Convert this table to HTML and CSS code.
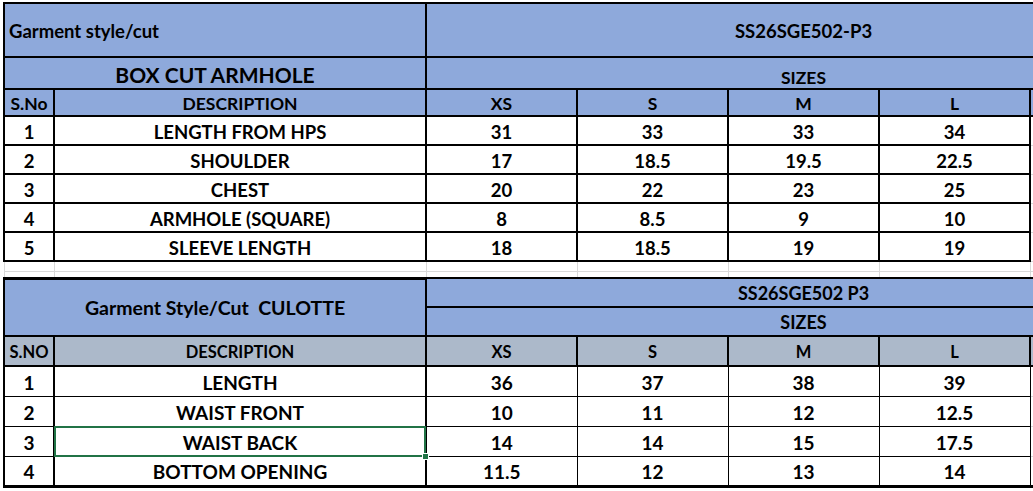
FILE: index.html
```html
<!DOCTYPE html>
<html>
<head>
<meta charset="utf-8">
<link rel="stylesheet" href="styles.css">
</head>
<body>
<div class="sheet">
<table class="grid">
  <colgroup>
    <col class="c-sno"><col class="c-desc"><col class="c-size"><col class="c-size"><col class="c-size"><col class="c-size"><col class="c-size">
  </colgroup>
  <tbody class="t1">
    <tr class="r-title">
      <td colspan="2" class="blue left title">Garment style/cut</td>
      <td colspan="5" class="blue code">SS26SGE502-P3</td>
    </tr>
    <tr class="r-sub">
      <td colspan="2" class="blue big">BOX CUT ARMHOLE</td>
      <td colspan="5" class="blue sizes">SIZES</td>
    </tr>
    <tr class="r-head">
      <td class="blue hd">S.No</td>
      <td class="blue hd">DESCRIPTION</td>
      <td class="blue hd">XS</td>
      <td class="blue hd">S</td>
      <td class="blue hd">M</td>
      <td class="blue hd">L</td>
      <td class="blue hd"></td>
    </tr>
    <tr class="r-data"><td>1</td><td>LENGTH FROM HPS</td><td>31</td><td>33</td><td>33</td><td>34</td><td class="off"></td></tr>
    <tr class="r-data"><td>2</td><td>SHOULDER</td><td>17</td><td>18.5</td><td>19.5</td><td>22.5</td><td class="off"></td></tr>
    <tr class="r-data"><td>3</td><td>CHEST</td><td>20</td><td>22</td><td>23</td><td>25</td><td class="off"></td></tr>
    <tr class="r-data"><td>4</td><td>ARMHOLE (SQUARE)</td><td>8</td><td>8.5</td><td>9</td><td>10</td><td class="off"></td></tr>
    <tr class="r-data"><td>5</td><td>SLEEVE LENGTH</td><td>18</td><td>18.5</td><td>19</td><td>19</td><td class="off"></td></tr>
  </tbody>
  <tbody class="gap">
    <tr class="r-gap1"><td></td><td></td><td></td><td></td><td></td><td></td><td></td></tr>
    <tr class="r-gap2"><td></td><td></td><td></td><td></td><td></td><td></td><td></td></tr>
  </tbody>
  <tbody class="t2">
    <tr class="r2-code">
      <td colspan="2" rowspan="2" class="blue title2">Garment Style/Cut&nbsp;&nbsp;CULOTTE</td>
      <td colspan="5" class="blue code">SS26SGE502 P3</td>
    </tr>
    <tr class="r2-sizes">
      <td colspan="5" class="blue sizes">SIZES</td>
    </tr>
    <tr class="r2-head">
      <td class="grey hd2">S.NO</td>
      <td class="grey hd2">DESCRIPTION</td>
      <td class="grey hd2">XS</td>
      <td class="grey hd2">S</td>
      <td class="grey hd2">M</td>
      <td class="grey hd2">L</td>
      <td class="grey hd2"></td>
    </tr>
    <tr class="r2-data"><td>1</td><td>LENGTH</td><td>36</td><td>37</td><td>38</td><td>39</td><td class="off"></td></tr>
    <tr class="r2-data"><td>2</td><td>WAIST FRONT</td><td>10</td><td>11</td><td>12</td><td>12.5</td><td class="off"></td></tr>
    <tr class="r2-data"><td>3</td><td class="selected">WAIST BACK</td><td>14</td><td>14</td><td>15</td><td>17.5</td><td class="off"></td></tr>
    <tr class="r2-data last"><td>4</td><td>BOTTOM OPENING</td><td>11.5</td><td>12</td><td>13</td><td>14</td><td class="off"></td></tr>
  </tbody>
</table>
</div>
</body>
</html>
```

FILE: styles.css
```css
html, body {
  margin: 0;
  padding: 0;
  background: #ffffff;
}

.sheet {
  width: 1033px;
  height: 491px;
  overflow: hidden;
  padding: 2px 0 0 3px;
  box-sizing: border-box;
}

.grid {
  border-collapse: collapse;
  table-layout: fixed;
  width: 1177px;
  font-family: "Lato", "Liberation Sans", sans-serif;
  font-weight: 700;
  font-variant-numeric: tabular-nums;
  color: #000000;
}

.c-sno { width: 50px; }
.c-desc { width: 372px; }
.c-size { width: 151px; }

.grid td {
  padding: 0;
  text-align: center;
  vertical-align: bottom;
  white-space: nowrap;
  overflow: hidden;
  line-height: 1;
}

/* table 1 */
.t1 td {
  border: 2px solid #000000;
  font-size: 18.5px;
  padding-bottom: 3px;
}

.blue { background: #8ea9db; }
.grey { background: #acb9ca; }

.r-title { height: 54px; }
.t1 .r-title td { vertical-align: middle; padding: 2px 0 0 0; font-size: 18.5px; }
.t1 .r-title td.left { text-align: left; padding-left: 4px; }

.r-sub { height: 32px; }
.t1 .big { font-size: 21px; padding-bottom: 3px; }
.t1 .sizes { font-size: 17.5px; padding-bottom: 2px; }

.r-head { height: 27px; }
.t1 .hd { font-size: 17.5px; padding-bottom: 3px; }

.r-data { height: 29px; }

.t1 td.off {
  border-top: 1px solid #d9d9d9;
  border-bottom: 1px solid #d9d9d9;
  border-right: none;
  background: #ffffff;
}

/* gap rows */
.gap td {
  border: 1px solid #d9d9d9;
  border-top: none;
}
.r-gap1 { height: 10px; }
.r-gap2 { height: 7px; }
.r-gap2 td { border-bottom: none; }

/* table 2 */
.t2 td {
  border: 1px solid #000000;
  font-size: 19px;
  padding-bottom: 4px;
}
.t2 .blue, .t2 .grey {
  border: 2px solid #000000;
}
.r2-code { height: 29px; }
.r2-sizes { height: 29px; }
.t2 .code, .t2 .sizes { font-size: 18px; padding-bottom: 4px; }
.t2 .title2 {
  font-size: 19.5px;
  vertical-align: middle;
  padding-bottom: 0;
  border-top-width: 3px;
}
.r2-code td { border-top-width: 3px; }

.r2-head { height: 30px; }
.t2 .hd2 { font-size: 16.5px; padding-bottom: 5px; }

.r2-data { height: 30px; }
.r2-data td:first-child { border-left: 2px solid #000000; border-right: 2px solid #000000; }
.r2-data td:nth-child(2) { border-right: 2px solid #000000; }
.r2-data.last td { border-bottom: 3px solid #000000; }

.t2 td.off {
  border-top: 1px solid #d9d9d9;
  border-bottom: none;
  border-right: none;
  background: #ffffff;
}
.r2-data.last td.off { border-bottom: 3px solid #000000; }

.grid td.selected {
  position: relative;
  overflow: visible;
}
.selected::after {
  content: "";
  position: absolute;
  left: -1px;
  top: -1px;
  right: -1px;
  bottom: -1px;
  border: 2px solid #217346;
  pointer-events: none;
  z-index: 3;
}
.selected::before {
  content: "";
  position: absolute;
  right: -4px;
  bottom: -4px;
  width: 5px;
  height: 5px;
  background: #217346;
  border: 1px solid #ffffff;
  z-index: 4;
}
```
